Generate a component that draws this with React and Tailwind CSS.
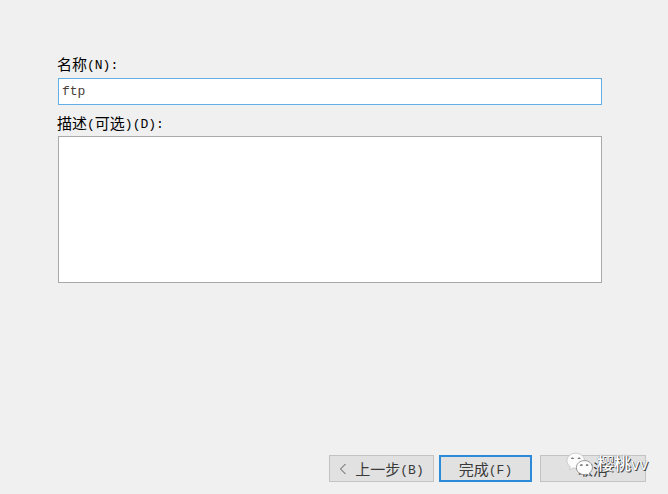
import { useState } from 'react';

function Latin({ children }) {
    return <span className="align-[1px] font-['Liberation_Mono','DejaVu_Sans_Mono',monospace] text-[13px] leading-none">{children}</span>;
}

function WizardButton({ children, primary, className }) {
    return (
        <button
            type="button"
            className={`h-[27px] whitespace-pre bg-[#e1e1e1] text-[15px] text-[#3a3a3a] ${primary ? 'border-2 border-[#2b8ad9] leading-[22px]' : 'border border-[#c3c3c3] leading-6'} ${className}`}
        >
            {children}
        </button>
    );
}

function Watermark() {
    return (
        <div className="pointer-events-none absolute -top-1 left-[26px] flex items-center gap-1">
            <svg width="27" height="26" viewBox="0 0 27 26" aria-hidden="true">
                <path
                    d="M9.8 1.2C4.9 1.2 1 4.4 1 8.7c0 2.5 1.2 4.5 3.2 5.8L3.5 17.9l3.6-1.9c.9.2 1.7.3 2.7.3 4.9 0 8.7-3.4 8.7-7.6S14.7 1.2 9.8 1.2z"
                    fill="#fcfcfc" stroke="#b5b5b5" strokeWidth=".6"
                />
                <path d="M5.3 6.7q1.2-1.2 2.4 0M11.9 6.7q1.2-1.2 2.4 0" fill="none" stroke="#666" strokeWidth="1.2" />
                <path
                    d="M18.4 8.6c-4.5 0-8 3-8 7s3.5 7 8 7c.9 0 1.8-.1 2.6-.4l3.1 1.7-.7-2.8c1.9-1.3 3-3.3 3-5.5 0-4-3.6-7-8-7z"
                    fill="#fcfcfc" stroke="#808080" strokeWidth=".8"
                />
                <path d="M14.3 13.5q1.1-1.1 2.2 0M20 13.5q1.1-1.1 2.2 0" fill="none" stroke="#555" strokeWidth="1.2" />
            </svg>
            <span className="whitespace-nowrap font-['Liberation_Sans','Noto_Sans_CJK_SC',sans-serif] text-[17px] font-medium leading-7 text-white [text-shadow:1px_1px_0_#444,0_0_1px_#666]">
                樱桃vv
            </span>
        </div>
    );
}

export default function App() {
    const [name, setName] = useState('ftp');
    const [description, setDescription] = useState('');

    return (
        <form className="flex min-h-screen flex-col bg-[#f0f0f0] pt-[54px] pb-3 font-['Noto_Sans_CJK_SC',sans-serif] text-black">
            <div className="flex flex-col pr-[66px] pl-[58px]">
                <label htmlFor="name" className="-ml-px h-6 text-[15px] leading-5">
                    名称<Latin>(N):</Latin>
                </label>
                <input
                    id="name"
                    type="text"
                    value={name}
                    onChange={e => setName(e.target.value)}
                    className="h-[27px] w-full border border-[#62aee8] bg-white px-[3px] font-['Liberation_Mono','DejaVu_Sans_Mono',monospace] text-[13px] text-[#4b4038] outline-none"
                />
                <label htmlFor="description" className="mt-2 -ml-px h-[23px] text-[15px] leading-5">
                    描述<Latin>(</Latin>可选<Latin>)(D):</Latin>
                </label>
                <textarea
                    id="description"
                    value={description}
                    onChange={e => setDescription(e.target.value)}
                    className="h-[147px] w-full resize-none border border-[#a9a9a9] bg-white p-1 text-[15px] outline-none"
                />
            </div>

            <div className="mt-auto flex justify-end pr-[22px]">
                <WizardButton className="w-[105px]">
                    <span className="flex items-center justify-center gap-2">
                        <svg width="8" height="12" viewBox="0 0 8 12" aria-hidden="true">
                            <path d="M6.5 1L1.5 6l5 5" fill="none" stroke="#555" strokeWidth="1" />
                        </svg>
                        <span>上一步<Latin>(B)</Latin></span>
                    </span>
                </WizardButton>
                <WizardButton primary className="ml-[5px] w-[93px]">
                    完成<Latin>(F)</Latin>
                </WizardButton>
                <div className="relative ml-2">
                    <WizardButton className="w-[106px]">取消</WizardButton>
                    <Watermark />
                </div>
            </div>
        </form>
    );
}
